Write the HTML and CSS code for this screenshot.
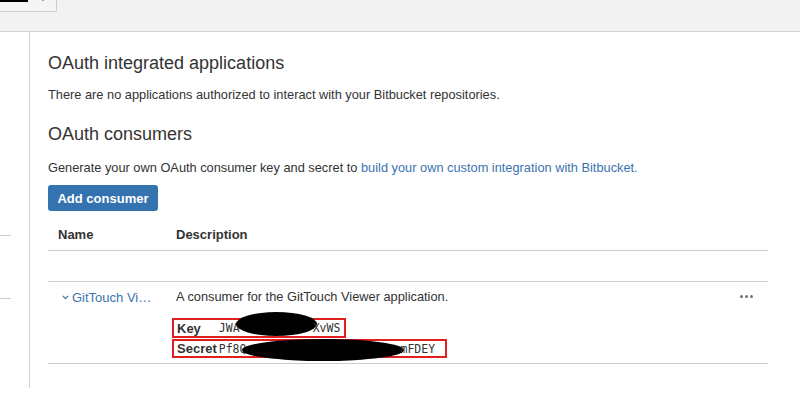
FILE: index.html
```html
<!DOCTYPE html>
<html>
<head>
<meta charset="utf-8">
<link rel="stylesheet" href="styles.css">
</head>
<body>
<div class="topbar">
  <div class="topbox"><span class="topredact"></span><span class="topdot"></span></div>
</div>
<div class="layout">
  <aside class="sidebar">
    <div class="side-line first"></div>
    <div class="side-line second"></div>
  </aside>
  <main class="main">
    <h2 class="heading">OAuth integrated applications</h2>
    <p class="text">There are no applications authorized to interact with your Bitbucket repositories.</p>
    <h2 class="heading second">OAuth consumers</h2>
    <p class="text text-second">Generate your own OAuth consumer key and secret to <a class="link" href="#">build your own custom integration with Bitbucket.</a></p>
    <button class="btn">Add consumer</button>
    <div class="table">
      <div class="thead">
        <div class="col-name">Name</div>
        <div class="col-desc">Description</div>
      </div>
      <div class="empty-row"></div>
      <div class="row">
        <div class="col-name name-cell">
          <svg class="chev" width="7" height="5" viewBox="0 0 7 5"><path d="M0.8 0.8 L3.5 3.6 L6.2 0.8" fill="none" stroke="#3b73af" stroke-width="1.2"/></svg>
          <a class="link" href="#">GitTouch Vi…</a>
        </div>
        <div class="col-desc">
          <div class="desc">A consumer for the GitTouch Viewer application.</div>
          <div class="cred key"><b>Key</b><span class="mono first">JWA</span><span class="blot blot-key"></span><span class="mono">XvWS</span></div>
          <div class="cred secret"><b>Secret</b><span class="mono">Pf8Q</span><span class="blot blot-secret"></span><span class="mono">mFDEY</span></div>
        </div>
        <div class="more"><span></span><span></span><span></span></div>
      </div>
    </div>
  </main>
</div>
</body>
</html>
```
FILE: styles.css
```css
* { box-sizing: border-box; }
html, body { margin: 0; padding: 0; background: #fff; }
body {
  font-family: "Liberation Sans", Arial, sans-serif;
  color: #333;
  font-size: 13px;
  width: 800px;
  height: 400px;
  overflow: hidden;
}
.topbar {
  height: 32px;
  background: #f2f2f2;
  border-bottom: 1px solid #d0d0d0;
}
.topbox {
  position: relative;
  width: 57px;
  height: 12px;
  background: #f5f5f5;
  border-right: 1px solid #ccc;
  border-bottom: 1px solid #ccc;
  border-bottom-right-radius: 2px;
}
.topredact {
  position: absolute;
  left: 0; top: 0;
  width: 28px; height: 2px;
  background: #000;
}
.topdot {
  position: absolute;
  left: 42px; top: 0;
  width: 2px; height: 1px;
  background: #999;
}
.layout {
  display: flex;
  height: 356px;
}
.sidebar {
  width: 30px;
  border-right: 1px solid #d0d0d0;
  flex: none;
}
.side-line {
  width: 11px;
  height: 1px;
  background: #ccc;
}
.side-line.first { margin-top: 203px; }
.side-line.second { margin-top: 62px; }
.main {
  padding-left: 18px;
  width: 738px;
}
.heading {
  font-size: 18px;
  font-weight: normal;
  margin: 0;
  line-height: 22px;
  margin-top: 20px;
}
.heading.second { margin-top: 19px; }
.text {
  margin: 12px 0 0;
  font-size: 12.8px;
  line-height: 18px;
}
.text.text-second { margin-top: 14px; }
.link { color: #3b73af; text-decoration: none; }
.btn {
  display: block;
  margin-top: 8px;
  height: 26px;
  width: 110px;
  padding: 0;
  background: #3572b0;
  color: #fff;
  border: none;
  border-radius: 3px;
  font-family: "Liberation Sans", Arial, sans-serif;
  font-size: 13px;
  font-weight: bold;
}
.table { margin-top: 7px; }
.thead {
  display: flex;
  height: 33px;
  align-items: center;
  font-weight: bold;
  border-bottom: 1px solid #ccc;
}
.col-name { width: 128px; padding-left: 10px; flex: none; }
.col-desc { flex: 1; }
.empty-row {
  height: 31px;
  border-bottom: 1px solid #ccc;
}
.row {
  display: flex;
  position: relative;
  padding-top: 6px;
  height: 82px;
  border-bottom: 1px solid #ccc;
}
.name-cell { padding-left: 14px; display: flex; align-items: center; height: 18px; gap: 3px; }
.chev { margin-top: 1px; }
.desc { line-height: 18px; font-size: 12.8px; }
.cred {
  display: inline-flex;
  align-items: center;
  border: 2px solid #e02020;
  height: 20px;
  padding-left: 3px;
  padding-right: 2px;
  white-space: nowrap;
  margin-left: -4px;
}
.cred.key { margin-top: 12px; width: 174px; }
.cred.secret { margin-top: 1px; width: 275px; height: 19px; display: flex; }
.cred b { font-weight: bold; }
.mono {
  font-family: "DejaVu Sans Mono", "Liberation Mono", monospace;
  font-size: 11.5px;
  color: #333;
}
.mono.first { margin-left: 18px; }
.secret .mono:first-of-type { margin-left: 2px; }
.blot {
  display: inline-block;
  background: #000;
  border-radius: 50%;
  flex: none;
}
.blot-key { width: 81px; margin: -8px -4px 0 -4px; height: 24px; }
.blot-secret { width: 162px; margin: 3px -4px 0 -4px; height: 22px; }
.more {
  position: absolute;
  right: 15px;
  top: 13px;
  display: flex;
  gap: 2px;
}
.more span {
  width: 3px; height: 3px;
  background: #707070;
  border-radius: 50%;
}
```
